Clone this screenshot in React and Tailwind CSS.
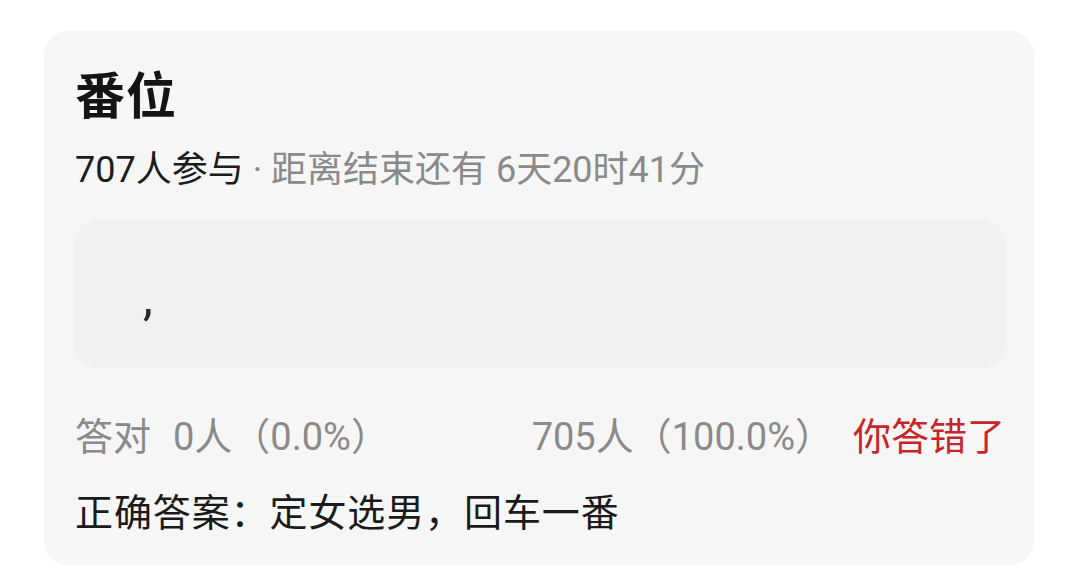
export default function App() {
  const font = { fontFamily: 'Roboto, "Noto Sans CJK SC", sans-serif' };
  return (
    <div className="w-[1079px] h-[569px] bg-white overflow-hidden pt-[31px] px-[44px]" style={font}>
      <div className="w-[990px] bg-[#f6f6f6] rounded-[24px] pt-[38px] pb-[28px] pl-[31px] pr-[29px]">
        <h1 className="text-[50px] leading-[56px] font-bold text-[#141414] tracking-[1px]">番位</h1>
        <p className="mt-[23px] text-[36px] leading-[44px] text-[#8a8a8a] whitespace-nowrap">
          <span className="text-[#1c1c1c]">707人参与</span> · 距离结束还有 6天20时41分
        </p>
        <div className="mt-[28px] h-[148px] bg-[#f1f1f1] rounded-[22px] flex items-center pl-[68px]">
          <span className="text-[50px] leading-[50px] text-[#2a2a2a] pt-[6px]">,</span>
        </div>
        <div className="mt-[45px] flex items-center justify-between text-[38px] leading-[48px] whitespace-nowrap">
          <div className="flex gap-[22px] text-[#8a8a8a]">
            <span>答对</span>
            <span>0人（0.0%）</span>
          </div>
          <div className="flex gap-[20px]">
            <span className="text-[#8a8a8a]">705人（100.0%）</span>
            <span className="text-[#c4262b]">你答错了</span>
          </div>
        </div>
        <p className="mt-[28px] text-[38px] leading-[48px] text-[#1a1a1a] whitespace-nowrap tracking-[0.9px]">正确答案：定女选男，回车一番</p>
      </div>
    </div>
  );
}
